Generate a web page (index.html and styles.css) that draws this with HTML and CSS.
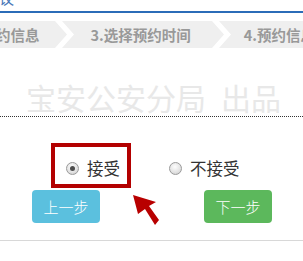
FILE: index.html
```html
<!DOCTYPE html>
<html>
<head>
<meta charset="utf-8">
<link rel="stylesheet" href="styles.css">
</head>
<body>
<div class="page">
  <div class="topcrop"><span class="toptext">议</span></div>
  <div class="blueline"></div>
  <div class="steps">
    <span class="step s1">约信息</span>
    <svg class="chev c1" width="22" height="27" viewBox="0 0 22 27"><polygon points="1,0 8,0 20,13.5 8,27 1,27 13,13.5" fill="#fff"/></svg>
    <span class="step s2">3.选择预约时间</span>
    <svg class="chev c2" width="22" height="27" viewBox="0 0 22 27"><polygon points="1,0 8,0 20,13.5 8,27 1,27 13,13.5" fill="#fff"/></svg>
    <span class="step s3">4.预约信息</span>
  </div>
  <div class="watermark"><span>宝安公安分局</span><span class="wm2">出品</span></div>
  <div class="form">
    <div class="options">
      <label class="opt o1"><span class="radio checked"></span><span class="otext">接受</span></label>
      <label class="opt o2"><span class="radio"></span><span class="otext">不接受</span></label>
    </div>
    <div class="buttons">
      <span class="btn prev">上一步</span>
      <span class="btn next">下一步</span>
    </div>
    <div class="highlight"></div>
    <svg class="arrow" width="40" height="40" viewBox="0 0 40 40">
      <polygon points="3,1 26,8 19,12 29,26 25,31 15,15 8,20" fill="#b80000"/>
    </svg>
  </div>
</div>
</body>
</html>
```
FILE: styles.css
```css
html, body {
  margin: 0;
  padding: 0;
  background: #fff;
}
.page {
  width: 303px;
  height: 261px;
  overflow: hidden;
  font-family: "Noto Sans CJK SC", "Liberation Sans", sans-serif;
}
.topcrop {
  height: 11px;
  overflow: hidden;
}
.toptext {
  display: block;
  margin-top: -10px;
  margin-left: -1px;
  font-size: 15px;
  line-height: 16px;
  color: #4a78b8;
}
.blueline {
  height: 2px;
  background: #2b6cb8;
}
.steps {
  margin-top: 8px;
  height: 27px;
  background: #efefef;
  display: flex;
  align-items: center;
  white-space: nowrap;
}
.step {
  font-size: 14.5px;
  font-weight: bold;
  color: #999;
  line-height: 27px;
  flex: none;
}
.chev {
  flex: none;
  display: block;
}
.s1 { margin-left: -4px; }
.c1 { margin-left: 14px; }
.s2 { margin-left: 15px; }
.c2 { margin-left: 20px; }
.s3 { margin-left: 11px; }
.watermark {
  height: 69px;
  box-sizing: border-box;
  padding-top: 34px;
  padding-left: 26px;
  font-size: 30px;
  line-height: 30px;
  color: #e8e8e8;
  white-space: nowrap;
  border-bottom: 1px dotted #333;
}
.wm2 {
  margin-left: 15px;
}
.form {
  position: relative;
  height: 124px;
  border-bottom: 1px solid #d8d8d8;
  box-sizing: border-box;
}
.options {
  display: flex;
  padding-top: 41px;
  height: 20px;
  align-items: center;
}
.opt {
  display: flex;
  align-items: center;
  font-size: 16.5px;
  color: #333;
  line-height: 20px;
}
.o1 { margin-left: 66px; }
.o2 { margin-left: 49px; }
.radio {
  width: 13px;
  height: 13px;
  border-radius: 50%;
  border: 1px solid #9a9a9a;
  background: radial-gradient(circle at 45% 35%, #fdfdfd 0%, #e4e4e4 55%, #c8c8c8 100%);
  box-sizing: border-box;
  position: relative;
  margin-right: 8px;
}
.radio.checked::after {
  content: "";
  position: absolute;
  left: 3px;
  top: 3px;
  width: 5px;
  height: 5px;
  border-radius: 50%;
  background: #4d4d4d;
}
.buttons {
  display: flex;
  margin-top: 12px;
}
.btn {
  width: 68px;
  height: 33px;
  border-radius: 4px;
  color: #fff;
  font-size: 15px;
  font-weight: 300;
  line-height: 33px;
  text-align: center;
}
.prev {
  margin-left: 32px;
  background: #5bc0de;
}
.next {
  margin-left: 104px;
  background: #5cb85c;
}
.highlight {
  position: absolute;
  left: 51px;
  top: 26px;
  width: 80px;
  height: 45px;
  border: 4px solid #b30000;
  box-sizing: border-box;
}
.arrow {
  position: absolute;
  left: 130px;
  top: 77px;
}
```
